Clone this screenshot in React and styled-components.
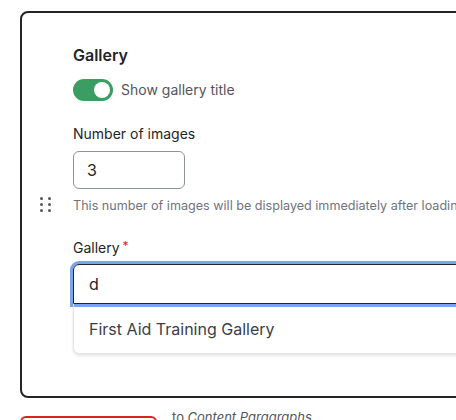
import React from "react";
import styled, { createGlobalStyle } from "styled-components";

const GlobalStyle = createGlobalStyle`
  html, body {
    margin: 0;
    background: #fff;
    overflow: hidden;
  }
  body {
    font-family: Inter, "Noto Sans", sans-serif;
    color: #232429;
  }
`;

const Page = styled.div`
  padding: 11px 0 0 20px;
  width: 600px;
`;

const Card = styled.div`
  width: 540px;
  border: 2px solid #232429;
  border-radius: 8px;
  display: flex;
  align-items: center;
`;

const Handle = styled.div`
  margin-left: 18px;
  display: grid;
  grid-template-columns: 3px 3px;
  column-gap: 5px;
  row-gap: 3px;
`;

const Dot = styled.span`
  width: 3px;
  height: 3px;
  border-radius: 50%;
  background: #545560;
`;

const Content = styled.div`
  flex: 1;
  margin-left: 22px;
  padding: 31px 0 42px;
  display: flex;
  flex-direction: column;
`;

const Title = styled.h3`
  margin: 0;
  font-size: 16px;
  line-height: 22px;
  font-weight: 600;
`;

const ToggleRow = styled.label`
  margin-top: 13px;
  display: flex;
  align-items: center;
  gap: 8px;
  font-size: 14px;
  line-height: 22px;
  color: #545560;
`;

const Switch = styled.span`
  width: 40px;
  height: 22px;
  border-radius: 11px;
  background: ${p => (p.$on ? "#3a9d62" : "#8e929c")};
  display: flex;
  align-items: center;
  justify-content: ${p => (p.$on ? "flex-end" : "flex-start")};
  padding: 0 3px;
  box-sizing: border-box;
`;

const Knob = styled.span`
  width: 16px;
  height: 16px;
  border-radius: 50%;
  background: #fff;
`;

const Label = styled.div`
  margin-top: ${p => p.$top}px;
  font-size: 14px;
  line-height: 20px;
  color: #232429;
`;

const Required = styled.span`
  color: #dc2323;
  margin-left: 3px;
  vertical-align: 3px;
  font-size: 12px;
`;

const NumberBox = styled.div`
  margin-top: 7px;
  width: 112px;
  height: 38px;
  box-sizing: border-box;
  border: 1px solid #8e929c;
  border-radius: 6px;
  padding: 0 13px;
  display: flex;
  align-items: center;
  font-size: 16px;
  color: #232429;
`;

const Description = styled.div`
  margin-top: 8px;
  font-size: 12.6px;
  line-height: 18px;
  color: #6f7380;
  white-space: nowrap;
`;

const SearchBox = styled.div`
  margin-top: 6px;
  height: 40px;
  box-sizing: border-box;
  border: 1px solid #232429;
  border-radius: 6px 6px 0 0;
  box-shadow: 0 0 0 3px #7aa3f0;
  padding: 0 15px;
  display: flex;
  align-items: center;
  font-size: 16px;
  color: #232429;
`;

const Menu = styled.ul`
  margin: 0;
  padding: 0;
  list-style: none;
  height: 50px;
  box-sizing: border-box;
  border: 1px solid #e3e4e8;
  border-top: none;
  border-radius: 0 0 6px 6px;
  box-shadow: 0 2px 3px rgba(0, 0, 0, 0.1);
`;

const MenuItem = styled.li`
  height: 49px;
  padding: 0 15px;
  display: flex;
  align-items: center;
  font-size: 16px;
  color: #3b3e47;
`;

const Footer = styled.div`
  margin-top: 10px;
  display: flex;
  align-items: flex-start;
  gap: 15px;
`;

const DangerButton = styled.button`
  margin-top: 8px;
  width: 137px;
  height: 32px;
  border: 2px solid #d72323;
  border-radius: 6px;
  background: #fff;
  color: #d72323;
  font-family: inherit;
  font-size: 14px;
`;

const Hint = styled.div`
  font-size: 13px;
  line-height: 18px;
  color: #545560;
  em {
    font-style: italic;
  }
`;

export default function App() {
  return (
    <>
      <GlobalStyle />
      <Page>
        <Card>
          <Handle>
            {Array.from({ length: 6 }).map((_, i) => (
              <Dot key={i} />
            ))}
          </Handle>
          <Content>
            <Title>Gallery</Title>
            <ToggleRow>
              <Switch $on>
                <Knob />
              </Switch>
              Show gallery title
            </ToggleRow>
            <Label $top={23}>Number of images</Label>
            <NumberBox>3</NumberBox>
            <Description>
              This number of images will be displayed immediately after loading the page.
            </Description>
            <Label $top={21}>
              Gallery<Required>*</Required>
            </Label>
            <SearchBox>d</SearchBox>
            <Menu>
              <MenuItem>First Aid Training Gallery</MenuItem>
            </Menu>
          </Content>
        </Card>
        <Footer>
          <DangerButton>Add Gallery</DangerButton>
          <Hint>
            to <em>Content Paragraphs</em>
          </Hint>
        </Footer>
      </Page>
    </>
  );
}
